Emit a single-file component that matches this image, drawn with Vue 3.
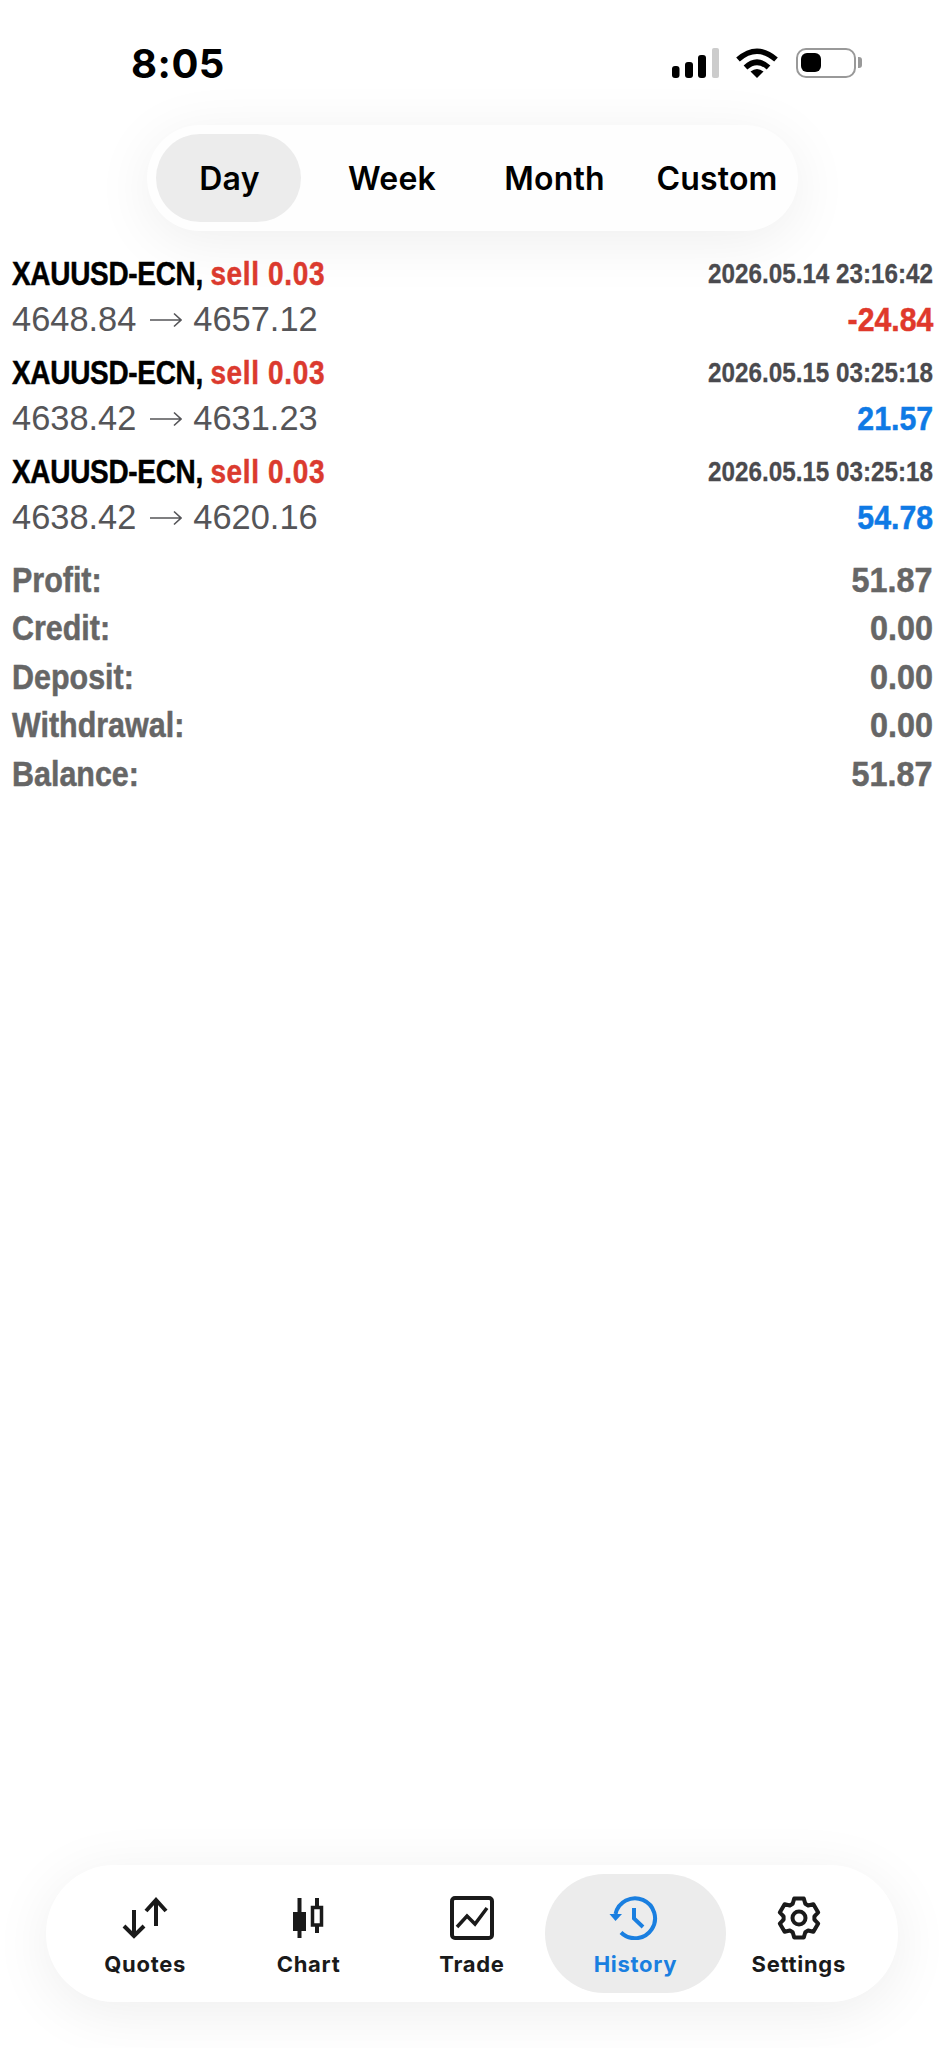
<script setup>
const ranges = ['Day', 'Week', 'Month', 'Custom']

const deals = [
  { date: '2026.05.14 23:16:42', from: '4648.84', to: '4657.12', result: '-24.84', loss: true },
  { date: '2026.05.15 03:25:18', from: '4638.42', to: '4631.23', result: '21.57', loss: false },
  { date: '2026.05.15 03:25:18', from: '4638.42', to: '4620.16', result: '54.78', loss: false },
]

const totals = [
  { label: 'Profit:', value: '51.87' },
  { label: 'Credit:', value: '0.00' },
  { label: 'Deposit:', value: '0.00' },
  { label: 'Withdrawal:', value: '0.00' },
  { label: 'Balance:', value: '51.87' },
]

// six teeth, worked out so they stay even
const gearPath = () => {
  const cx = 24
  const cy = 22
  const pts = []
  for (let i = 0; i < 6; i++) {
    const a = (Math.PI / 3) * i - Math.PI / 2
    const at = (r, d) => `${(cx + r * Math.cos(a + d)).toFixed(1)} ${(cy + r * Math.sin(a + d)).toFixed(1)}`
    pts.push(at(15.5, -0.42), at(20, -0.24), at(20, 0.24), at(15.5, 0.42))
  }
  return 'M' + pts.join('L') + 'Z'
}
</script>

<template>
  <div class="page">
    <div class="status">
      <span class="time">8:05</span>
      <div class="status-icons">
        <svg class="signal" width="47" height="30" viewBox="0 0 47 30">
          <rect x="0" y="18" width="7.5" height="12" rx="3" fill="#000" />
          <rect x="13" y="14" width="8" height="16" rx="3" fill="#000" />
          <rect x="26" y="7" width="8" height="23" rx="3" fill="#000" />
          <rect x="40" y="0" width="7" height="30" rx="2" fill="#ccc" />
        </svg>
        <svg class="wifi" width="42" height="30" viewBox="0 0 42 30">
          <path d="M2 11.5Q21 -5 40 11.5" fill="none" stroke="#000" stroke-width="5.5" />
          <path d="M9.5 19.5Q21 9 32.5 19.5" fill="none" stroke="#000" stroke-width="5.5" />
          <path d="M14.5 23.5Q21 18.5 27.5 23.5L21 30Z" fill="#000" />
        </svg>
        <div class="battery">
          <div class="battery-fill"></div>
          <div class="battery-nub"></div>
        </div>
      </div>
    </div>

    <div class="ranges">
      <div v-for="(r, i) in ranges" :key="r" class="range" :class="{ active: i === 0 }">{{ r }}</div>
    </div>

    <div class="deals">
      <div v-for="(d, i) in deals" :key="i" class="deal">
        <div class="line first">
          <span class="symbol">XAUUSD-ECN, <span class="side">sell 0.03</span></span>
          <span class="date">{{ d.date }}</span>
        </div>
        <div class="line second">
          <span class="prices">
            {{ d.from }}
            <svg class="arrow" width="32" height="16" viewBox="0 0 32 16" fill="none" stroke="#555558" stroke-width="1.6">
              <path d="M0 8H31M24 1.5L31 8L24 14.5" />
            </svg>
            {{ d.to }}
          </span>
          <span class="result" :class="d.loss ? 'loss' : 'gain'">{{ d.result }}</span>
        </div>
      </div>
    </div>

    <div class="totals">
      <div v-for="t in totals" :key="t.label" class="total">
        <span class="total-label">{{ t.label }}</span>
        <span class="total-value">{{ t.value }}</span>
      </div>
    </div>

    <nav class="tabs">
      <div class="tab">
        <svg width="50" height="44" viewBox="0 0 50 44" fill="none" stroke="#1a1a1a" stroke-width="4">
          <path d="M14 14V40M4 30L14 40L24 30" />
          <path d="M36 4V30M26 15L36 4L46 15" />
        </svg>
        <span>Quotes</span>
      </div>
      <div class="tab">
        <svg width="48" height="44" viewBox="0 0 48 44" fill="none" stroke="#1a1a1a" stroke-width="4">
          <path d="M14.5 2V42" />
          <rect x="8" y="16" width="13" height="19" fill="#1a1a1a" stroke="none" />
          <path d="M32 2V11M32 29V37" />
          <rect x="27.5" y="11.5" width="9" height="17.5" stroke-width="3.5" />
        </svg>
        <span>Chart</span>
      </div>
      <div class="tab">
        <svg width="44" height="44" viewBox="0 0 44 44" fill="none" stroke="#1a1a1a" stroke-width="4">
          <rect x="2" y="2" width="40" height="40" rx="3" />
          <path d="M7 31L17 20L25 28L37 12" stroke-width="3.5" />
        </svg>
        <span>Trade</span>
      </div>
      <div class="tab active">
        <svg width="54" height="44" viewBox="0 0 54 44" fill="none" stroke="#1a7fe0" stroke-width="4">
          <path d="M7.5 18A20 20 0 1 1 13 36.5" />
          <path d="M1.5 18H14L7.5 25Z" fill="#1a7fe0" stroke="none" />
          <path d="M26 12V22.5L35 31" />
        </svg>
        <span>History</span>
      </div>
      <div class="tab">
        <svg width="48" height="44" viewBox="0 0 48 44" fill="none" stroke="#1a1a1a" stroke-width="4" stroke-linejoin="round">
          <path :d="gearPath()" />
          <circle cx="24" cy="22" r="6.5" />
        </svg>
        <span>Settings</span>
      </div>
    </nav>
  </div>
</template>

<style scoped>
.page {
  display: flex;
  flex-direction: column;
  height: 2048px;
  background: #fff;
  font-family: "Liberation Sans", Arial, sans-serif;
  overflow: hidden;
}

.status {
  display: flex;
  justify-content: space-between;
  height: 125px;
  box-sizing: border-box;
  padding: 48px 89px 0 131px;
}

.time {
  font-family: Inter, sans-serif;
  font-size: 40px;
  font-weight: 700;
  letter-spacing: 0.5px;
  line-height: 32px;
  color: #000;
}

.status-icons {
  display: flex;
  gap: 17px;
  height: 30px;
}

.battery {
  position: relative;
  width: 60px;
  height: 30px;
  margin-left: 1px;
  box-sizing: border-box;
  border: 2.5px solid #999;
  border-radius: 10px;
  padding: 3px;
}

.battery-fill {
  width: 20px;
  height: 19px;
  background: #000;
  border-radius: 6px;
}

.battery-nub {
  position: absolute;
  right: -8px;
  top: 7px;
  width: 4px;
  height: 11px;
  background: #999;
  border-radius: 0 3px 3px 0;
}

.ranges {
  display: grid;
  grid-template-columns: repeat(4, 145px);
  gap: 17.5px;
  width: 651px;
  height: 106px;
  box-sizing: border-box;
  margin-left: 147px;
  padding: 9px;
  background: #fefefe;
  border-radius: 53px;
  box-shadow: 0 10px 60px rgba(0, 0, 0, 0.07);
}

.range {
  display: flex;
  align-items: center;
  justify-content: center;
  padding-left: 2px;
  font-family: Inter, sans-serif;
  font-size: 32px;
  font-weight: 600;
  letter-spacing: 0.2px;
  color: #000;
  border-radius: 44px;
}

.range.active {
  background: #ececec;
}

.deals {
  display: flex;
  flex-direction: column;
  gap: 6px;
  margin-top: 18px;
  padding: 0 12px;
}

.line {
  display: flex;
  justify-content: space-between;
  align-items: baseline;
  white-space: nowrap;
}

.first {
  height: 48px;
  line-height: 48px;
}

.second {
  height: 45px;
  line-height: 45px;
}

/* no narrow face installed, so the bold is squeezed */
.symbol {
  display: inline-block;
  font-size: 34px;
  font-weight: 700;
  letter-spacing: -0.35px;
  -webkit-text-stroke: 0.5px #000;
  color: #000;
  transform: scaleX(0.822);
  transform-origin: left center;
}

.side {
  letter-spacing: 0.8px;
  -webkit-text-stroke: 0.5px #db3a2e;
  color: #db3a2e;
}

.date {
  display: inline-block;
  font-size: 28px;
  font-weight: 700;
  -webkit-text-stroke: 0.3px #4a4a4e;
  color: #4a4a4e;
  transform: translateY(-2px) scaleX(0.865);
  transform-origin: right center;
}

.prices {
  display: flex;
  align-items: center;
  font-size: 34.4px;
  color: #555558;
}

.arrow {
  margin: 0 11px 0 14px;
}

.result {
  display: inline-block;
  font-size: 34px;
  font-weight: 700;
  -webkit-text-stroke: 0.5px currentColor;
  transform: scaleX(0.89);
  transform-origin: right center;
}

.loss {
  color: #e0392b;
}

.gain {
  color: #0f7ae5;
}

.totals {
  margin-top: 16px;
  padding: 0 12px;
}

.total {
  display: flex;
  justify-content: space-between;
  height: 48.4px;
  line-height: 48.4px;
  font-size: 35px;
  font-weight: 700;
  -webkit-text-stroke: 0.5px #666;
  color: #666;
}

.total-label {
  transform: scaleX(0.87);
  transform-origin: left center;
}

.total-value {
  transform: scaleX(0.925);
  transform-origin: right center;
}

.tabs {
  display: grid;
  grid-template-columns: repeat(5, 1fr);
  width: 852px;
  height: 137px;
  box-sizing: border-box;
  margin: auto 0 46px 46px;
  padding: 9px 17.5px;
  background: #fff;
  border-radius: 68px;
  box-shadow: 0 10px 60px rgba(0, 0, 0, 0.07);
}

.tab {
  display: flex;
  flex-direction: column;
  align-items: center;
  padding-top: 22px;
  gap: 10px;
  font-family: Inter, sans-serif;
  font-size: 22px;
  font-weight: 700;
  letter-spacing: 0.7px;
  line-height: 28px;
  color: #1a1a1a;
  border-radius: 60px;
}

.tab.active {
  margin: 0 -9px;
  background: #ececec;
  color: #1a7fe0;
}
</style>
